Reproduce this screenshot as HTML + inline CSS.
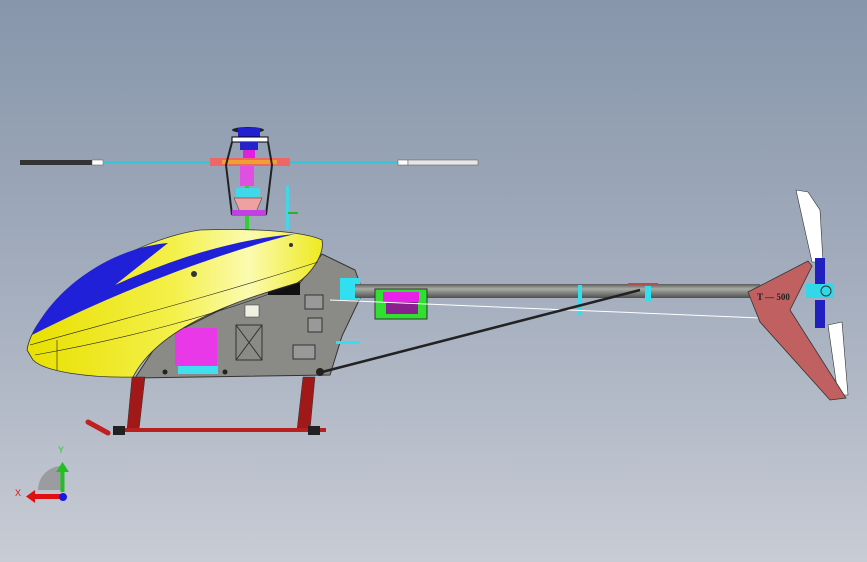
<!DOCTYPE html>
<html><head><meta charset="utf-8"><style>
html,body{margin:0;padding:0;width:867px;height:562px;overflow:hidden}
body{background:linear-gradient(#8796ab,#a3adbd 50%,#c8ccd5)}
svg{position:absolute;left:0;top:0}
</style></head><body>
<svg width="867" height="562" viewBox="0 0 867 562" xmlns="http://www.w3.org/2000/svg" font-family="Liberation Sans, sans-serif">
<defs>
<linearGradient id="boom" x1="0" y1="0" x2="0" y2="1"><stop offset="0" stop-color="#5a5d5a"/><stop offset=".35" stop-color="#a9aba5"/><stop offset="1" stop-color="#4e504e"/></linearGradient>
<linearGradient id="can" x1="0" y1="0" x2="1" y2="0"><stop offset="0" stop-color="#e8e000"/><stop offset=".5" stop-color="#f4f04a"/><stop offset=".75" stop-color="#fbfbb0"/><stop offset="1" stop-color="#eeea20"/></linearGradient>
</defs>
<!-- main rotor -->
<rect x="20" y="160" width="72" height="5" fill="#333"/>
<rect x="92" y="160" width="11" height="5" fill="#fff" stroke="#555" stroke-width=".5"/>
<rect x="103" y="161.5" width="110" height="2" fill="#30c8d8"/>
<rect x="288" y="161.5" width="110" height="2" fill="#30c8d8"/>
<rect x="398" y="160" width="10" height="5" fill="#fff" stroke="#555" stroke-width=".5"/>
<rect x="408" y="160" width="70" height="5" fill="#e6e6e6" stroke="#555" stroke-width=".5"/>
<rect x="210" y="158" width="80" height="8" fill="#e66" />
<rect x="222" y="160" width="55" height="4" fill="#f0a030"/>
<ellipse cx="248" cy="130" rx="16" ry="3" fill="#222"/>
<rect x="238" y="128" width="22" height="10" fill="#2020d0"/>
<rect x="232" y="137" width="36" height="5" fill="#fff" stroke="#000"/>
<rect x="240" y="142" width="18" height="8" fill="#2424c8"/>
<rect x="243" y="150" width="12" height="8" fill="#e020e0"/>
<path d="M232 142 L226 165 L232 215 M268 142 L272 165 L266 215" stroke="#222" stroke-width="2" fill="none"/>
<rect x="240" y="166" width="14" height="20" fill="#e050e0"/>
<rect x="245" y="185" width="4" height="45" fill="#30d030"/>
<rect x="236" y="188" width="24" height="10" fill="#40d8e8"/>
<path d="M234 198 L262 198 L256 212 L240 212Z" fill="#f0a0a0" stroke="#333" stroke-width=".5"/>
<rect x="232" y="210" width="34" height="6" fill="#c040e0"/>
<rect x="286" y="186" width="3" height="44" fill="#40d8e8"/>
<rect x="288" y="212" width="10" height="2" fill="#30b030"/>
<!-- frame -->
<path d="M135 378 L160 340 L240 300 L300 283 L322 254 L355 270 L363 292 L342 336 L330 375 Z" fill="#8a8a86" stroke="#333" stroke-width="1"/>
<rect x="175" y="328" width="42" height="38" fill="#e838e8"/>
<rect x="178" y="366" width="40" height="8" fill="#40e0f0"/>
<rect x="268" y="283" width="32" height="12" fill="#111"/>
<rect x="245" y="305" width="14" height="12" fill="#f0f0e0" stroke="#333" stroke-width=".5"/>
<path d="M236 325 h26 v35 h-26 z M236 325 l26 35 M262 325 l-26 35" stroke="#333" fill="none"/>
<rect x="305" y="295" width="18" height="14" fill="#999" stroke="#333"/>
<rect x="308" y="318" width="14" height="14" fill="#999" stroke="#333"/>
<rect x="293" y="345" width="22" height="14" fill="#999" stroke="#333"/>
<rect x="340" y="278" width="20" height="22" fill="#30e0f0"/>
<rect x="336" y="341" width="24" height="3" fill="#30e0f0"/>
<circle cx="165" cy="372" r="2.5" fill="#222"/><circle cx="225" cy="372" r="2.5" fill="#222"/>
<!-- canopy -->
<path d="M27 350 C35 300 130 240 200 230 C260 228 305 232 322 240 C325 255 310 275 297 283 C240 300 160 325 133 377 C90 378 45 372 33 360 Z" fill="url(#can)" stroke="#333" stroke-width=".8"/>
<path d="M30 340 C50 290 110 248 168 243 L115 285 C170 260 230 240 295 234 C260 242 150 275 32 335 Z" fill="#2020d8"/>
<path d="M30 345 C100 325 200 300 318 262 M35 355 C120 340 220 315 300 282 M57 340 L57 370" stroke="#222" stroke-width=".6" fill="none"/>
<circle cx="194" cy="274" r="3" fill="#333"/><circle cx="291" cy="245" r="2" fill="#333"/>
<!-- tail boom -->
<rect x="355" y="284" width="405" height="14" fill="url(#boom)"/>
<rect x="375" y="289" width="52" height="30" fill="#30e030" stroke="#333"/>
<rect x="383" y="292" width="36" height="10" fill="#e820e8"/>
<rect x="386" y="302" width="32" height="12" fill="#8a2090"/>
<rect x="578" y="285" width="4" height="30" fill="#30e0f0"/>
<line x1="330" y1="300" x2="760" y2="318" stroke="#fff" stroke-width="1"/>
<line x1="322" y1="372" x2="640" y2="290" stroke="#222" stroke-width="2.5"/>
<circle cx="320" cy="372" r="4" fill="#222"/>
<rect x="628" y="283" width="30" height="2" fill="#b05050"/>
<rect x="645" y="286" width="6" height="15" fill="#30e0f0"/>
<!-- tail -->
<path d="M796 190 L808 192 L820 210 L823 262 L812 262 Z" fill="#fff" stroke="#333" stroke-width=".6"/>
<path d="M828 325 L842 322 L848 395 L838 395 Z" fill="#fff" stroke="#333" stroke-width=".6"/>
<path d="M748 292 L808 261 L812 266 L790 310 L846 398 L830 400 L760 322 Z" fill="#c06060" stroke="#333" stroke-width=".8"/>
<text x="757" y="300" font-size="9" font-weight="bold" fill="#222" font-family="Liberation Serif, serif">T — 500</text>
<rect x="815" y="258" width="10" height="28" fill="#2020c0"/>
<rect x="815" y="300" width="10" height="28" fill="#2020c0"/>
<rect x="806" y="284" width="28" height="14" fill="#30d8e8"/>
<circle cx="826" cy="291" r="5" fill="#30d8e8" stroke="#333"/>
<!-- landing gear -->
<path d="M132 377 L145 377 L139 430 L127 430 Z" fill="#a01818" stroke="#333" stroke-width=".5"/>
<path d="M303 377 L315 377 L310 430 L297 430 Z" fill="#a01818" stroke="#333" stroke-width=".5"/>
<rect x="113" y="428" width="213" height="4" fill="#b82020"/>
<path d="M88 422 L108 433" stroke="#c02020" stroke-width="5" stroke-linecap="round"/>
<rect x="113" y="426" width="12" height="9" fill="#222"/><rect x="308" y="426" width="12" height="9" fill="#222"/>
<!-- axis triad -->
<path d="M38 490 A24 24 0 0 1 62 466 L62 490 Z" fill="#9a9ca0"/>
<rect x="60.5" y="470" width="4" height="22" fill="#20c020"/>
<path d="M56 472 L62.5 462 L69 472 Z" fill="#20c020"/>
<rect x="34" y="494" width="28" height="5" fill="#e01010"/>
<path d="M35 490 L26 496.5 L35 503 Z" fill="#e01010"/>
<circle cx="63" cy="497" r="4" fill="#1818e0"/>
<text x="58" y="453" font-size="9" fill="#20d020">Y</text>
<text x="15" y="496" font-size="9" fill="#e01010">X</text>
</svg>
</body></html>
